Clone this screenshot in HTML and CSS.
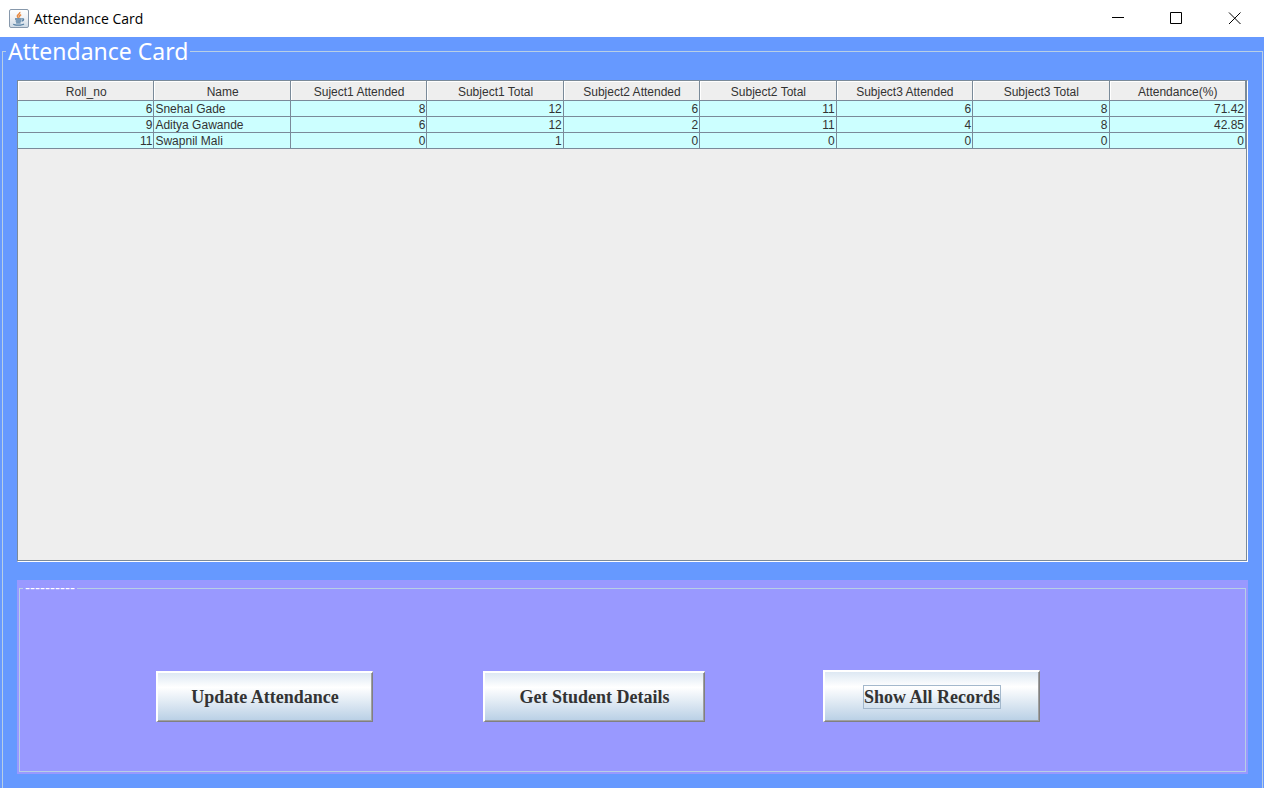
FILE: index.html
```html
<!DOCTYPE html>
<html lang="en">
<head>
<meta charset="utf-8">
<title>Attendance Card</title>
<link rel="stylesheet" href="styles.css">
</head>
<body>
<header class="titlebar">
  <svg class="app-icon" width="20" height="19" viewBox="0 0 20 19" aria-hidden="true">
    <defs><linearGradient id="tile" x1="0" y1="0" x2="0" y2="1"><stop offset="0" stop-color="#fff"/><stop offset=".45" stop-color="#f0f2f5"/><stop offset="1" stop-color="#ccd9e5"/></linearGradient></defs>
    <rect x=".5" y=".5" width="19" height="18" rx="1.5" fill="url(#tile)" stroke="#8798ab"/>
    <path d="M10.8 3C11.4 5 7.6 5.7 8.4 7.6C8.7 8.4 9.4 8.8 9.6 9.4M12.2 5.8C10.3 6.5 9.9 7.3 10.8 8.4" fill="none" stroke="#e78a42" stroke-width="1.5"/>
    <path d="M6 10H12.6M6.7 12H12.2M7.1 13.8H11.6M12.8 10C15.2 9.2 15.2 11.5 12.7 12.2M4.5 14.8C4.3 16.5 13.5 16.6 14.8 14.9" fill="none" stroke="#557fa3" stroke-width="1.3"/>
  </svg>
  <h1 class="title">Attendance Card</h1>
  <div class="window-controls">
    <button class="window-button" type="button" aria-label="Minimize"><svg width="13" height="13" viewBox="0 0 13 13"><path d="M0 5.5H12"/></svg></button>
    <button class="window-button" type="button" aria-label="Maximize"><svg width="13" height="13" viewBox="0 0 13 13"><path d="M.5 .5H11.5V11.5H.5Z"/></svg></button>
    <button class="window-button" type="button" aria-label="Close"><svg width="13" height="13" viewBox="0 0 13 13"><path d="M1 .5L12.5 12M12.5 .5L1 12"/></svg></button>
  </div>
</header>
<main class="content">
  <fieldset class="card">
    <legend class="card-title">Attendance Card</legend>
    <div class="records">
      <table class="grid">
        <thead>
          <tr><th>Roll_no</th><th>Name</th><th>Suject1 Attended</th><th>Subject1 Total</th><th>Subject2 Attended</th><th>Subject2 Total</th><th>Subject3 Attended</th><th>Subject3 Total</th><th>Attendance(%)</th></tr>
        </thead>
        <tbody>
          <tr><td>6</td><td class="name">Snehal Gade</td><td>8</td><td>12</td><td>6</td><td>11</td><td>6</td><td>8</td><td>71.42</td></tr>
          <tr><td>9</td><td class="name">Aditya Gawande</td><td>6</td><td>12</td><td>2</td><td>11</td><td>4</td><td>8</td><td>42.85</td></tr>
          <tr><td>11</td><td class="name">Swapnil Mali</td><td>0</td><td>1</td><td>0</td><td>0</td><td>0</td><td>0</td><td>0</td></tr>
        </tbody>
      </table>
    </div>
    <div class="panel">
      <fieldset class="actions">
        <legend class="actions-title">----------</legend>
        <div class="button-row">
          <button class="action" type="button">Update Attendance</button>
          <button class="action wide" type="button">Get Student Details</button>
          <button class="action tall" type="button"><span class="focused">Show All Records</span></button>
        </div>
      </fieldset>
    </div>
  </fieldset>
</main>
</body>
</html>
```
FILE: styles.css
```css
* { box-sizing: border-box; }

body {
  margin: 0;
  min-height: 100vh;
  display: flex;
  flex-direction: column;
  background: #6699ff;
  font-family: "Liberation Sans", Arial, sans-serif;
  color: #333;
}

.titlebar {
  display: flex;
  align-items: center;
  height: 37px;
  padding-left: 9px;
  background: #fff;
  color: #000;
}

.title {
  margin: 0 0 0 5px;
  font: 400 14px/19px "Open Sans", "Noto Sans", sans-serif;
}

.window-controls { display: flex; margin-left: auto; padding-right: 1px; }

.window-button {
  display: grid;
  place-items: center;
  width: 58px;
  height: 37px;
  padding: 0;
  border: 0;
  background: none;
}

.window-button svg { fill: none; stroke: #000; stroke-width: 1; }

.content {
  flex: 1;
  display: flex;
  padding: 0 1px 0 2px;
}

.card {
  flex: 1;
  min-width: 0;
  margin: 0;
  padding: 14px 14px;
  border: 1px solid #b8cfe5;
  border-bottom: 0;
}

.card-title {
  margin-left: -11px;
  padding: 0 2px;
  color: #fff;
  font: 400 23px/29px "Noto Sans", Tahoma, sans-serif;
}

.records {
  min-height: 482px;
  border: 1px solid #7a8a99;
  border-right-color: #fff;
  border-bottom-color: #fff;
  background: #eee;
  box-shadow: inset -1px -1px #7a8a99;
}

.grid {
  width: 100%;
  padding-right: 1px;
  table-layout: fixed;
  border-spacing: 0;
  font-size: 12px;
}

.grid th {
  height: 20px;
  padding: 3px 0 0 1px;
  border-right: 1px solid #7a8a99;
  border-bottom: 1px solid #7a8a99;
  box-shadow: inset 1px 1px #fff;
  font-weight: 400;
  line-height: 16px;
}

.grid td {
  height: 16px;
  padding: 1px 1px 0;
  border-right: 1px solid #7a8a99;
  border-bottom: 1px solid #7a8a99;
  background: #ccffff;
  line-height: 14px;
  text-align: right;
}

.grid .name { text-align: left; }

.panel {
  margin-top: 18px;
  padding: 0 2px 2px 2px;
  background: #9999ff;
}

.actions {
  min-width: 0;
  min-height: 192px;
  margin: 0;
  padding: 0;
  border: 1px solid #b8cfe5;
}

.actions-title {
  margin-left: 3px;
  padding: 0 2px;
  color: #fff;
  font-size: 15px;
  line-height: 16px;
}

.button-row {
  display: grid;
  grid-template-columns: 327fr 340fr 422fr;
  align-items: end;
  padding: 74px 0 48px 136px;
}

.action {
  width: 217px;
  height: 51px;
  padding: 0;
  border: 2px solid;
  border-color: #fff #808080 #808080 #fff;
  border-width: 2px 1px 1px 2px;
  background: linear-gradient(#dde8f3, #fff 30%, #b8cfe5);
  box-shadow: inset -1px -1px #a0a0a0;
  color: #333;
  font: 700 18px/22px "Liberation Serif", "Times New Roman", serif;
}

.action.wide { width: 222px; }

.action.tall { height: 52px; }

.focused {
  display: inline-block;
  border: 1px solid #a3b8cc;
}
```
